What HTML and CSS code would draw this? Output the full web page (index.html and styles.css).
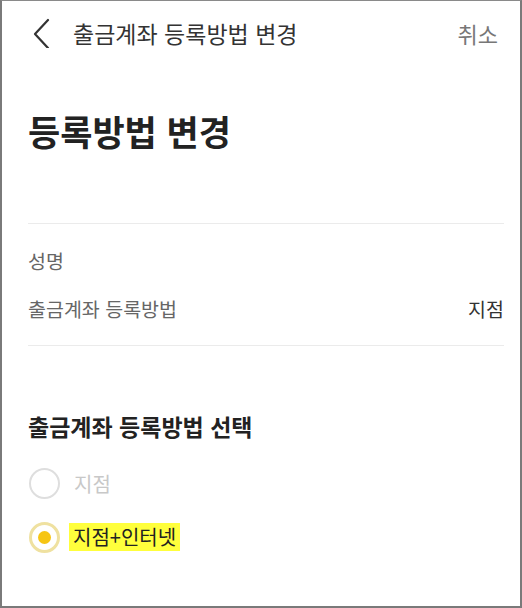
FILE: index.html
```html
<!DOCTYPE html>
<html lang="ko">
  <head>
    <meta charset="UTF-8" />
    <meta name="viewport" content="width=device-width, initial-scale=1.0" />
    <title>출금계좌 등록방법 변경</title>
    <link rel="stylesheet" href="styles.css">
  </head>
  <body>
    <div class="screen">
      <header class="top-bar">
        <button class="back-btn" aria-label="뒤로">
          <svg width="18" height="30" viewBox="0 0 18 30">
            <path d="M15 2 L2 16 L15 30" fill="none" stroke="#333" stroke-width="2.2" stroke-linecap="round" stroke-linejoin="round" />
          </svg>
        </button>
        <h2 class="top-title">출금계좌 등록방법 변경</h2>
        <span class="cancel">취소</span>
      </header>

      <main class="content">
        <h1 class="page-title">등록방법 변경</h1>

        <hr class="divider first" />

        <div class="info">
          <p class="info-name">성명</p>
          <div class="info-row">
            <span class="info-label">출금계좌 등록방법</span>
            <span class="info-value">지점</span>
          </div>
        </div>

        <hr class="divider second" />

        <h3 class="section-title">출금계좌 등록방법 선택</h3>

        <ul class="radio-list">
          <li class="radio-item disabled">
            <span class="radio"></span>
            <span class="radio-label">지점</span>
          </li>
          <li class="radio-item checked">
            <span class="radio"></span>
            <span class="radio-label">지점+인터넷</span>
          </li>
        </ul>
      </main>
    </div>
  </body>
</html>
```

FILE: styles.css
```css
* {
  margin: 0;
  padding: 0;
  box-sizing: border-box;
}

body {
  font-family: "Noto Sans CJK KR", "Noto Sans", sans-serif;
  background: #fff;
  color: #222;
}

.screen {
  width: 522px;
  height: 608px;
  background: #fff;
  border-top: 1px solid #8a8a8a;
  border-left: 2px solid #7a7a7a;
  border-right: 2px solid #7a7a7a;
  border-bottom: 2px solid #7a7a7a;
  overflow: hidden;
}

/* top navigation */
.top-bar {
  height: 63px;
  display: flex;
  align-items: center;
  padding: 0 22px 0 31px;
}

.back-btn {
  background: none;
  border: none;
  width: 18px;
  height: 30px;
  display: flex;
  margin-right: 22px;
}

.top-title {
  flex: 1;
  font-size: 23px;
  font-weight: 400;
  color: #333;
}

.cancel {
  font-size: 22px;
  color: #777;
}

.content {
  padding: 0 16px 0 26px;
}

.page-title {
  margin-top: 46px;
  font-size: 35px;
  line-height: 42px;
  font-weight: 700;
  color: #222;
}

.divider {
  border: none;
  height: 1px;
  background: #ebebeb;
}

.divider.first {
  margin-top: 71px;
}

.divider.second {
  margin-top: 23px;
}

/* account info */
.info {
  margin-top: 24px;
}

.info-name {
  font-size: 19.5px;
  line-height: 26px;
  color: #666;
}

.info-row {
  margin-top: 22px;
  display: flex;
  justify-content: space-between;
  font-size: 19.5px;
  line-height: 26px;
}

.info-label {
  color: #666;
}

.info-value {
  color: #333;
}

.section-title {
  margin-top: 65px;
  font-size: 23px;
  line-height: 30px;
  font-weight: 700;
  color: #222;
}

/* radio options */
.radio-list {
  list-style: none;
  margin-top: 26px;
  display: flex;
  flex-direction: column;
  gap: 22px;
}

.radio-item {
  height: 32px;
  display: flex;
  align-items: center;
}

.radio {
  width: 31px;
  height: 31px;
  border-radius: 50%;
  margin-left: 1px;
  display: flex;
  align-items: center;
  justify-content: center;
}

.disabled .radio {
  border: 2px solid #dedede;
}

.disabled .radio-label {
  margin-left: 14px;
  font-size: 20px;
  color: #c8c8c8;
}

.checked .radio {
  border: 3px solid #efe1a0;
}

.checked .radio::after {
  content: '';
  width: 13px;
  height: 13px;
  border-radius: 50%;
  background: #f6c514;
}

.checked .radio-label {
  margin-left: 9px;
  padding: 0 4px;
  font-size: 20px;
  line-height: 28px;
  color: #222;
  background: #ffff3c;
}
```
